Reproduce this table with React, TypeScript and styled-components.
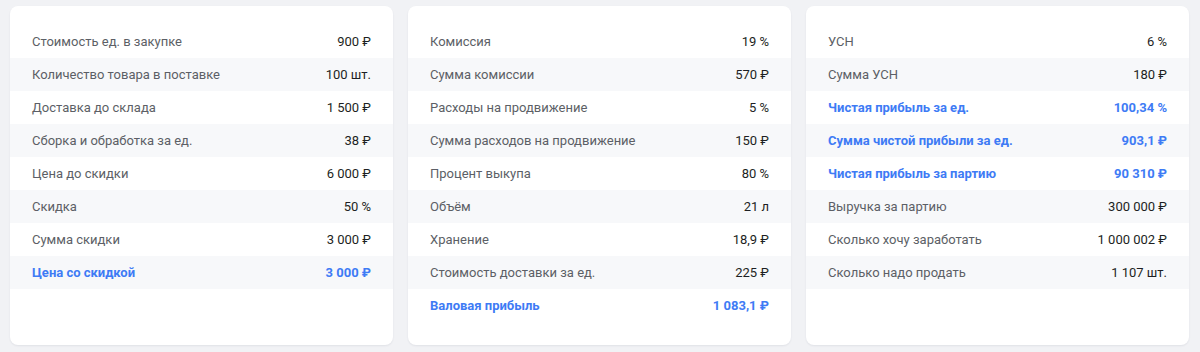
import React from 'react';
import styled, { createGlobalStyle } from 'styled-components';

interface RowData {
    label: string;
    value: string;
    accent?: boolean;
}

const columns: RowData[][] = [
    [
        { label: 'Стоимость ед. в закупке', value: '900 ₽' },
        { label: 'Количество товара в поставке', value: '100 шт.' },
        { label: 'Доставка до склада', value: '1 500 ₽' },
        { label: 'Сборка и обработка за ед.', value: '38 ₽' },
        { label: 'Цена до скидки', value: '6 000 ₽' },
        { label: 'Скидка', value: '50 %' },
        { label: 'Сумма скидки', value: '3 000 ₽' },
        { label: 'Цена со скидкой', value: '3 000 ₽', accent: true },
    ],
    [
        { label: 'Комиссия', value: '19 %' },
        { label: 'Сумма комиссии', value: '570 ₽' },
        { label: 'Расходы на продвижение', value: '5 %' },
        { label: 'Сумма расходов на продвижение', value: '150 ₽' },
        { label: 'Процент выкупа', value: '80 %' },
        { label: 'Объём', value: '21 л' },
        { label: 'Хранение', value: '18,9 ₽' },
        { label: 'Стоимость доставки за ед.', value: '225 ₽' },
        { label: 'Валовая прибыль', value: '1 083,1 ₽', accent: true },
    ],
    [
        { label: 'УСН', value: '6 %' },
        { label: 'Сумма УСН', value: '180 ₽' },
        { label: 'Чистая прибыль за ед.', value: '100,34 %', accent: true },
        { label: 'Сумма чистой прибыли за ед.', value: '903,1 ₽', accent: true },
        { label: 'Чистая прибыль за партию', value: '90 310 ₽', accent: true },
        { label: 'Выручка за партию', value: '300 000 ₽' },
        { label: 'Сколько хочу заработать', value: '1 000 002 ₽' },
        { label: 'Сколько надо продать', value: '1 107 шт.' },
    ],
];

const GlobalStyle = createGlobalStyle`
  body {
    margin: 0;
    background: #f1f2f5;
    font-family: Roboto, 'Liberation Sans', sans-serif;
  }
`;

const App: React.FC = () => {
    return (
        <>
            <GlobalStyle />
            <Page>
                {columns.map((rows, i) => (
                    <Card key={i}>
                        {rows.map((row, j) => (
                            <Row key={j}>
                                <Label $accent={row.accent}>{row.label}</Label>
                                <Value $accent={row.accent}>{row.value}</Value>
                            </Row>
                        ))}
                    </Card>
                ))}
            </Page>
        </>
    );
}

const Page = styled.div`
  display: grid;
  grid-template-columns: repeat(3, 1fr);
  gap: 15px;
  padding: 6px 11px 7px 10px;
  height: 352px;
  box-sizing: border-box;
`;

const Card = styled.div`
  background: #fff;
  border-radius: 8px;
  box-shadow: 0 1px 2px rgba(30, 40, 60, 0.08);
  padding: 19px 0 23px;
`;

const Row = styled.div`
  display: flex;
  align-items: center;
  justify-content: space-between;
  height: 33px;
  padding: 0 22px;
  font-size: 13px;

  &:nth-child(even) {
    background: #f7f8fa;
  }
`;

const Label = styled.span<{ $accent?: boolean }>`
  color: ${p => (p.$accent ? '#3e7bf5' : '#5c5f66')};
  font-weight: ${p => (p.$accent ? 700 : 400)};
`;

const Value = styled.span<{ $accent?: boolean }>`
  color: ${p => (p.$accent ? '#3e7bf5' : '#1d1f23')};
  font-weight: ${p => (p.$accent ? 700 : 400)};
`;

export default App;
